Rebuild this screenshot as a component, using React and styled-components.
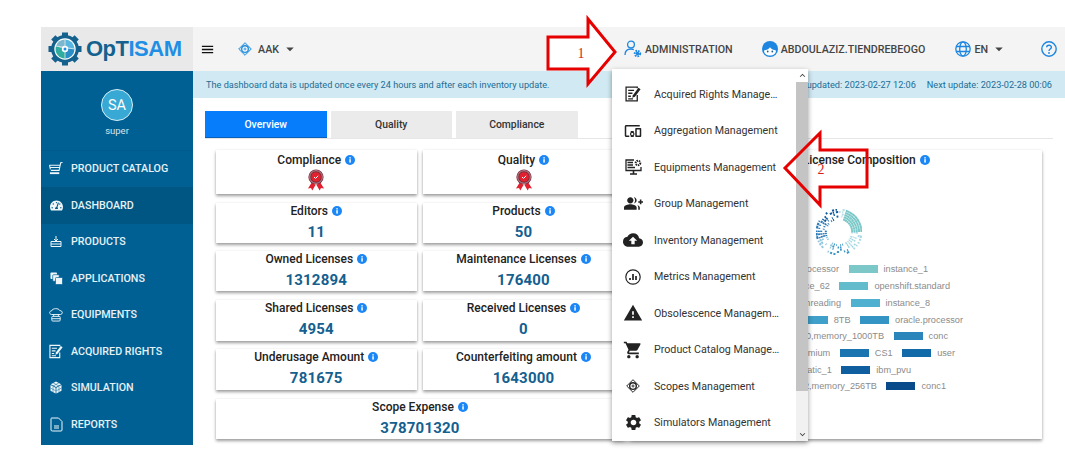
import React from 'react';
import styled, { createGlobalStyle } from 'styled-components';
import {
   MdMenu, MdDevicesOther, MdGroupAdd, MdCloudUpload, MdWarning, MdShoppingCart, MdSettings,
   MdArrowDropDown, MdKeyboardArrowUp, MdKeyboardArrowDown,
} from 'react-icons/md';
import { FaTachometerAlt } from 'react-icons/fa';

const GlobalStyle = createGlobalStyle`
   html, body { margin: 0; padding: 0; background: #fff; }
   body { font-family: Roboto, "Liberation Sans", sans-serif; }
   * { box-sizing: border-box; }
`

const Page = styled.div`
   position: relative;
   width: 1065px;
   height: 454px;
   padding: 27px 0 9px 41px;
   overflow: hidden;
`

const Shell = styled.div`
   position: relative;
   display: grid;
   grid-template-columns: 152px minmax(0, 1fr);
   grid-template-rows: 44px 1fr;
   height: 100%;
`

const Brand = styled.div`
   display: flex;
   align-items: center;
   gap: 4px;
   padding-left: 7px;
   background: #e9e9e9;
`

const BrandText = styled.span`
   font-family: "Liberation Sans", Arial, sans-serif;
   font-size: 22px;
   font-weight: 700;
   letter-spacing: -0.5px;
   color: #14618e;
   span { color: #1f8fe6; }
`

const TopBar = styled.header`
   display: flex;
   align-items: center;
   padding: 0 8px 0 7px;
   background: #f4f4f4;
   color: #444;
   font-size: 10.7px;
   font-weight: 500;
`

const TopItem = styled.div`
   display: flex;
   align-items: center;
   gap: ${p => p.$gap || 4}px;
   margin-left: ${p => p.$left || 0}px;
   white-space: nowrap;
`

const Caret = styled(MdArrowDropDown)`
   margin-left: ${p => p.$left}px;
`

const Sidebar = styled.nav`
   background: #006093;
   color: #e6f1f6;
`

const Profile = styled.div`
   display: flex;
   flex-direction: column;
   align-items: center;
   height: 79.5px;
   padding-top: 18px;
   border-bottom: 1px solid #005a8a;
`

const Avatar = styled.div`
   display: flex;
   align-items: center;
   justify-content: center;
   width: 32px;
   height: 32px;
   border: 1px solid #d7eef6;
   border-radius: 50%;
   background: #38a9d4;
   color: #fff;
   font-size: 14.5px;
`

const UserName = styled.div`
   margin-top: 4px;
   font-size: 9.5px;
   color: #d5e6ee;
`

const NavItem = styled.div`
   display: flex;
   align-items: center;
   gap: 8px;
   height: 36.5px;
   padding-left: 8px;
   font-size: 10.7px;
   font-weight: 500;
   background: ${p => (p.$active ? '#005682' : 'transparent')};
`

const NavIcon = styled.span`
   display: flex;
   justify-content: center;
   width: 14px;
   color: #eef6fa;
`

const Main = styled.main`
   min-width: 0;
`

const Banner = styled.div`
   display: flex;
   align-items: center;
   justify-content: space-between;
   height: 27px;
   padding: 0 13px;
   background: #d0e9f3;
   color: #1d6c95;
   font-size: 9.17px;
   white-space: nowrap;
   div { display: flex; gap: 11px; }
`

const Tabs = styled.div`
   display: flex;
   gap: 4px;
   height: 28px;
   margin: 13px 12px 0 12px;
   border-bottom: 1px solid #e6e6e6;
`

const Tab = styled.div`
   display: flex;
   align-items: center;
   justify-content: center;
   width: 121.5px;
   height: 27px;
   font-size: 10.4px;
   font-weight: 500;
   color: ${p => (p.$active ? '#fff' : '#333')};
   background: ${p => (p.$active ? '#067dfb' : '#ebebeb')};
   border-bottom: 1px solid ${p => (p.$active ? '#0a5fb8' : '#ebebeb')};
`

const Board = styled.div`
   display: grid;
   grid-template-columns: 200.5px 201px 411.5px;
   grid-template-rows: 44px 40px 40px 41px 41px 40px;
   column-gap: 6.5px;
   row-gap: 8.5px;
   margin: 11px 0 0 23px;
`

const Card = styled.div`
   display: flex;
   flex-direction: column;
   align-items: center;
   grid-column: ${p => (p.$wide ? '1 / 3' : 'auto')};
   padding-top: ${p => (p.$badge ? 2 : 0.5)}px;
   background: #fff;
   box-shadow: 0 2px 3px rgba(0, 0, 0, 0.38), 0 0 2px rgba(0, 0, 0, 0.06);
`

const CardTitle = styled.div`
   display: flex;
   align-items: center;
   gap: 4px;
   height: 15px;
   font-size: 12px;
   font-weight: 500;
   color: #222;
   white-space: nowrap;
`

const CardValue = styled.div`
   margin-top: 3.5px;
   font-size: 15px;
   line-height: 20px;
   font-weight: 700;
   letter-spacing: 0.2px;
   color: #14608f;
`

const Badge = styled.svg`
   margin-top: 2px;
`

const Panel = styled.section`
   grid-column: 3;
   grid-row: 1 / -1;
   display: flex;
   flex-direction: column;
   padding: 2px 0 0 0;
   background: #fff;
   box-shadow: 0 2px 3px rgba(0, 0, 0, 0.38), 0 0 2px rgba(0, 0, 0, 0.06);
`

const PanelTitle = styled(CardTitle)`
   align-self: center;
   margin-left: 60px;
`

const Donut = styled.svg`
   flex: none;
   margin: 42px 0 0 185.5px;
`

const Legend = styled.div`
   margin-top: 6px;
`

const LegendRow = styled.div`
   display: flex;
   justify-content: flex-end;
   align-items: center;
   gap: 6px;
   height: 16.72px;
   padding-right: ${p => p.$right}px;
   font-family: "Liberation Sans", Arial, sans-serif;
   font-size: 9.2px;
   color: #8b8b8b;
   white-space: nowrap;
`

const Swatch = styled.i`
   flex: none;
   width: 29px;
   height: 8px;
   margin-left: 3.5px;
   background: ${p => p.$color};
`

const Menu = styled.div`
   position: absolute;
   left: 571px;
   top: 42px;
   display: flex;
   width: 196px;
   height: 372px;
   background: #fff;
   box-shadow: 0 2px 5px rgba(0, 0, 0, 0.4);
`

const MenuList = styled.ul`
   flex: 1;
   min-width: 0;
   margin: 0;
   padding: 7px 0 0;
   list-style: none;
`

const MenuItem = styled.li`
   display: flex;
   align-items: center;
   height: 36.5px;
   font-size: 10.7px;
   color: #333;
`

const MenuIcon = styled.span`
   display: flex;
   justify-content: center;
   flex: none;
   width: 42px;
   color: #222;
`

const MenuLabel = styled.span`
   width: 126.5px;
   overflow: hidden;
   white-space: nowrap;
   text-overflow: ellipsis;
`

const Scrollbar = styled.div`
   display: flex;
   flex-direction: column;
   flex: none;
   width: 12px;
   background: #f1f1f1;
   color: #444;
`

const ScrollCap = styled.div`
   display: flex;
   justify-content: center;
   align-items: center;
   flex: none;
   height: 13px;
   background: ${p => (p.$plain ? '#fff' : '#f1f1f1')};
`

const ScrollThumb = styled.div`
   flex: none;
   height: 309px;
   background: #c4c4c4;
`

const ScrollTrack = styled.div`
   flex: 1;
`

const Callout = styled.svg`
   position: absolute;
   left: 0;
   top: 0;
   pointer-events: none;
`

const CalloutNumber = styled.text`
   font-family: "Liberation Serif", serif;
   font-size: 14px;
   fill: #d81b1b;
   text-anchor: middle;
`

function InfoDot() {
   return (
      <svg width="10" height="10" viewBox="0 0 10 10">
         <circle cx="5" cy="5" r="5" fill="#1b86f5" />
         <rect x="4.3" y="4.2" width="1.5" height="3.4" fill="#fff" />
         <rect x="4.3" y="2.2" width="1.5" height="1.3" fill="#fff" />
      </svg>
   )
}

function Rosette() {
   return (
      <Badge width="18" height="22" viewBox="0 0 18 22">
         <path d="M5 13 L1 19.5 L4 19 L5.3 21.5 L8.5 16z" fill="#e2202e" />
         <path d="M13 13 L17 19.5 L14 19 L12.7 21.5 L9.5 16z" fill="#e2202e" />
         <circle cx="9" cy="8" r="7.6" fill="#7d2a3a" />
         <circle cx="9" cy="8" r="6.3" fill="none" stroke="#c9a6ad" strokeWidth="0.8" />
         <circle cx="9" cy="8" r="4.8" fill="#e2202e" />
         <path d="M7 8 L8.5 9.4 L11.2 6.8" fill="none" stroke="#fff" strokeWidth="1" />
      </Badge>
   )
}

function Logo() {
   const teeth = [0, 45, 90, 135, 180, 225, 270, 315]
   return (
      <svg width="34" height="34" viewBox="0 0 34 34">
         {teeth.map(a => (
            <rect key={a} x="14" y="0.5" width="6" height="6" fill="#14618e" transform={`rotate(${a} 17 17)`} />
         ))}
         <circle cx="17" cy="17" r="12.3" fill="#fff" stroke="#14618e" strokeWidth="3.2" />
         <path d="M17 17 L17 7.5 A9.5 9.5 0 0 1 26.5 17z" fill="#58b7e0" />
         <path d="M17 17 L26.5 17 A9.5 9.5 0 0 1 17 26.5z" fill="#2a8fc7" />
         <path d="M17 17 L17 26.5 A9.5 9.5 0 0 1 8 14z" fill="#2fae9f" />
         <path d="M17 17 L8 14 A9.5 9.5 0 0 1 17 7.5z" fill="#7bb8cf" />
         <path d="M17 7.5 V26.5 M8 14 L26.5 17" stroke="#e9e9e9" strokeWidth="0.8" />
         <circle cx="17" cy="17" r="3.2" fill="#fff" />
         <circle cx="17" cy="17" r="1.5" fill="#1f8fe6" />
      </svg>
   )
}

function ScopeIcon({ size = 14, color = '#222', fill = 'none' }) {
   return (
      <svg width={size} height={size} viewBox="0 0 16 16" fill="none" stroke={color} strokeWidth="1.6">
         <path d="M8 0.8 L15.2 8 L8 15.2 L0.8 8z" fill={fill} strokeWidth="1.1" />
         <circle cx="8" cy="8" r="3.8" fill="#fff" />
         <path d="M8 6.2 V9.8 M6.2 8 H9.8" strokeWidth="1" />
      </svg>
   )
}

function AdminIcon() {
   return (
      <svg width="18" height="18" viewBox="0 0 18 18" fill="none" stroke="#1c86e0" strokeWidth="1.3">
         <circle cx="7" cy="4.5" r="3.4" />
         <path d="M1 15 C1 10.5 4 9 7 9 C8 9 9 9.2 9.8 9.6" />
         <circle cx="13.5" cy="13.5" r="2.7" strokeWidth="2" strokeDasharray="1.6 1" />
         <circle cx="13.5" cy="13.5" r="1.8" fill="#1c86e0" stroke="none" />
      </svg>
   )
}

function FaceIcon() {
   return (
      <svg width="16" height="16" viewBox="0 0 16 16">
         <circle cx="8" cy="8" r="8" fill="#1c86e0" />
         <path d="M2 9.5 C4 9 7 8 8 6.2 C9 8 12 9 14 9.5 C14 13 11 14.6 8 14.6 C5 14.6 2 13 2 9.5z" fill="#fff" />
         <circle cx="5.7" cy="10.5" r="0.9" fill="#1c5f8e" />
         <circle cx="10.3" cy="10.5" r="0.9" fill="#1c5f8e" />
      </svg>
   )
}

function GlobeIcon() {
   return (
      <svg width="16" height="16" viewBox="0 0 16 16" fill="none" stroke="#1c86e0" strokeWidth="1.3">
         <circle cx="8" cy="8" r="7.2" />
         <ellipse cx="8" cy="8" rx="3.3" ry="7.2" />
         <path d="M1 5.5 H15 M1 10.5 H15" />
      </svg>
   )
}

function HelpIcon() {
   return (
      <svg width="16" height="16" viewBox="0 0 16 16" fill="none" stroke="#1c86e0" strokeWidth="1.4">
         <circle cx="8" cy="8" r="7.2" />
         <path d="M5.7 6.3 C5.7 3.6 10.4 3.6 10.4 6.2 C10.4 8 8 8 8 10" />
         <circle cx="8" cy="12" r="0.9" fill="#1c86e0" stroke="none" />
      </svg>
   )
}

function CartLine() {
   return (
      <svg width="15" height="15" viewBox="0 0 15 15" fill="none" stroke="currentColor" strokeWidth="1.1">
         <path d="M14.5 1 L12.5 1.4 L10.8 9.5 H2" />
         <path d="M0.5 4 H12 M1 6.5 H11.5 M1.5 8.5 L0.5 4" />
         <path d="M1 12.5 H11" strokeWidth="2" />
      </svg>
   )
}

function BoxDown() {
   return (
      <svg width="12" height="13" viewBox="0 0 12 13" fill="none" stroke="currentColor" strokeWidth="1">
         <path d="M1 6.5 H11 V11.5 H1z M1 9 H11" />
         <path d="M6 1 V6 M4 4 L6 6 L8 4" />
      </svg>
   )
}

function StackedPages() {
   return (
      <svg width="13" height="13" viewBox="0 0 13 13" fill="currentColor">
         <rect x="0.5" y="0.5" width="6.5" height="6.5" rx="0.8" />
         <rect x="2.7" y="2.7" width="6.5" height="6.5" rx="0.8" stroke="#006093" strokeWidth="0.7" />
         <rect x="5.5" y="5.5" width="7" height="7" rx="0.8" stroke="#006093" strokeWidth="0.7" />
      </svg>
   )
}

function CloudServer() {
   return (
      <svg width="15" height="15" viewBox="0 0 15 15" fill="none" stroke="currentColor" strokeWidth="1">
         <path d="M2.5 7.5 C0 7 0 3.8 2.8 3.6 C3.6 0.6 10.5 0.4 11.5 3.3 C15 3.4 15 7 12.5 7.5 H2.5z" />
         <rect x="3" y="9.5" width="9" height="5" rx="1" />
         <path d="M3 12 H12 M5 7.5 V9.5 M10 7.5 V9.5" />
      </svg>
   )
}

function RightsNote({ size = 15 }) {
   return (
      <svg width={size} height={size} viewBox="0 0 15 15" fill="none" stroke="currentColor" strokeWidth="1.2">
         <path d="M11.5 8.5 V14 H1 V1 H11.5 V2" />
         <path d="M3 4 H8.5 M3 6.8 H7 M3 9.6 H5.5 M3 12 H7.5" />
         <path d="M6.8 11 L7.4 8.6 L12.6 1.6 L14.6 3 L9.3 10 z" fill="currentColor" stroke="none" />
      </svg>
   )
}

function Cube() {
   return (
      <svg width="12" height="13" viewBox="0 0 12 13" fill="currentColor">
         <path d="M6 0.5 L11.2 3.3 L6 6 L0.8 3.3z" />
         <path d="M0.5 4 L5.6 6.7 V12.6 L0.5 9.7z" />
         <path d="M11.5 4 L6.4 6.7 V12.6 L11.5 9.7z" />
         <path d="M3 1.8 L9 5 M9 1.8 L3 5 M3 5.5 V11 M9 5.5 V11 M0.5 7 L5.6 9.7 M6.4 9.7 L11.5 7" stroke="#006093" strokeWidth="0.5" fill="none" />
      </svg>
   )
}

function ReportFile() {
   return (
      <svg width="13" height="15" viewBox="0 0 13 15" fill="none" stroke="currentColor" strokeWidth="1">
         <path d="M1.5 1 H8.5 L12 4.5 V13 Q12 14 11 14 H2.5 Q1 14 1 13 V2 Q1 1 1.5 1z" />
         <path d="M4 9 H9 M4 11 H9" strokeWidth="1.1" />
      </svg>
   )
}

function MonitorGear() {
   return (
      <svg width="17" height="17" viewBox="0 0 17 17" fill="none" stroke="currentColor" strokeWidth="1.3">
         <path d="M9 1 H1 V11.5 H16 V8" />
         <path d="M2.5 3.5 H8 M2.5 6 H8 M2.5 8.5 H10" />
         <path d="M8.5 11.5 V14.5 M5 15 H12" strokeWidth="1.6" />
         <circle cx="13" cy="4" r="2.3" strokeWidth="2" strokeDasharray="1.3 0.8" />
      </svg>
   )
}

function MetricsDial() {
   return (
      <svg width="16" height="16" viewBox="0 0 16 16" fill="none" stroke="currentColor" strokeWidth="1.2">
         <circle cx="8" cy="8" r="7.2" />
         <path d="M5 11 V9 M8 11 V5 M11 11 V7" strokeWidth="1.7" />
      </svg>
   )
}

const donutPalette = angle => {
   if (angle < 12) return '#b9dfe6'
   if (angle < 88) return '#7cc8c8'
   if (angle < 150) return '#a6d8e4'
   if (angle < 205) return '#3d97c7'
   if (angle < 250) return '#92c6df'
   if (angle < 300) return '#2a7ab7'
   return '#0e5a9d'
}

// scattered tiles of the ring, seeded so the picture stays the same
const donutTiles = () => {
   const tiles = []
   let seed = 17
   const next = () => {
      seed = (seed * 16807) % 2147483647
      return seed / 2147483647
   }
   for (let r = 13.2; r < 22.5; r += 2.3) {
      for (let a = 0; a < 360; a += 9) {
         const solid = a >= 12 && a < 88
         if (!solid && next() < 0.34) continue
         const span = solid ? 9 : 3 + next() * 4
         const rad = d => ((d - 90) * Math.PI) / 180
         const x = (d, q) => (23 + q * Math.cos(rad(d))).toFixed(2)
         const y = (d, q) => (23 + q * Math.sin(rad(d))).toFixed(2)
         tiles.push({
            d: `M${x(a, r)} ${y(a, r)} A${r} ${r} 0 0 1 ${x(a + span, r)} ${y(a + span, r)}`,
            color: donutPalette(a),
            key: `${r}-${a}`,
         })
      }
   }
   return tiles
}

const navItems = [
   { text: 'PRODUCT CATALOG', icon: <CartLine /> },
   { text: 'DASHBOARD', icon: <FaTachometerAlt size={13} />, active: true },
   { text: 'PRODUCTS', icon: <BoxDown /> },
   { text: 'APPLICATIONS', icon: <StackedPages /> },
   { text: 'EQUIPMENTS', icon: <CloudServer /> },
   { text: 'ACQUIRED RIGHTS', icon: <RightsNote /> },
   { text: 'SIMULATION', icon: <Cube /> },
   { text: 'REPORTS', icon: <ReportFile /> },
]

const cards = [
   { title: 'Compliance', badge: true },
   { title: 'Quality', badge: true },
   { title: 'Editors', value: '11' },
   { title: 'Products', value: '50' },
   { title: 'Owned Licenses', value: '1312894' },
   { title: 'Maintenance Licenses', value: '176400' },
   { title: 'Shared Licenses', value: '4954' },
   { title: 'Received Licenses', value: '0' },
   { title: 'Underusage Amount', value: '781675' },
   { title: 'Counterfeiting amount', value: '1643000' },
   { title: 'Scope Expense', value: '378701320', wide: true },
]

const legend = [
   { right: 114, parts: [['sag.processor', '#7cc8c8'], ['instance_1']] },
   { right: 92, parts: [['instance_62', '#63bccb'], ['openshift.standard']] },
   { right: 112, parts: [['hyperthreading', '#4fb0d0'], ['instance_8']] },
   { right: 79, parts: [['ibm.memory', '#3fa0ca'], ['8TB', '#3494c3'], ['oracle.processor']] },
   { right: 94, parts: [['cpu_10,memory_1000TB', '#2a85bb'], ['conc']] },
   { right: 87, parts: [['premium', '#1a74b0'], ['CS1', '#136aa8'], ['user']] },
   { right: 131, parts: [['static_1', '#0e5ea0'], ['ibm_pvu']] },
   { right: 96, parts: [['cpu_2,memory_256TB', '#084a8a'], ['conc1']] },
]

const menuItems = [
   { text: 'Acquired Rights Management', icon: <RightsNote size={16} /> },
   { text: 'Aggregation Management', icon: <MdDevicesOther size={18} /> },
   { text: 'Equipments Management', icon: <MonitorGear /> },
   { text: 'Group Management', icon: <MdGroupAdd size={19} /> },
   { text: 'Inventory Management', icon: <MdCloudUpload size={20} /> },
   { text: 'Metrics Management', icon: <MetricsDial /> },
   { text: 'Obsolescence Management', icon: <MdWarning size={20} /> },
   { text: 'Product Catalog Management', icon: <MdShoppingCart size={20} /> },
   { text: 'Scopes Management', icon: <ScopeIcon size={14} /> },
   { text: 'Simulators Management', icon: <MdSettings size={19} /> },
]

function App() {
   return (
      <Page>
         <GlobalStyle />
         <Shell>
            <Brand>
               <Logo />
               <BrandText>OpT<span>ISAM</span></BrandText>
            </Brand>
            <TopBar>
               <MdMenu size={19} color="#111" />
               <TopItem $left={23} $gap={6}>
                  <ScopeIcon size={14} color="#2a8fd8" fill="#bfe0f5" />
                  <span>AAK</span>
                  <Caret size={18} $left={-4} />
               </TopItem>
               <TopItem $left={325} $gap={3}>
                  <AdminIcon />
                  <span>ADMINISTRATION</span>
               </TopItem>
               <TopItem $left={29} $gap={3}>
                  <FaceIcon />
                  <span>ABDOULAZIZ.TIENDREBEOGO</span>
               </TopItem>
               <TopItem $left={30} $gap={3}>
                  <GlobeIcon />
                  <span>EN</span>
                  <Caret size={18} $left={-1} />
               </TopItem>
               <TopItem $left={33}>
                  <HelpIcon />
               </TopItem>
            </TopBar>
            <Sidebar>
               <Profile>
                  <Avatar>SA</Avatar>
                  <UserName>super</UserName>
               </Profile>
               {navItems.map(item => (
                  <NavItem key={item.text} $active={item.active}>
                     <NavIcon>{item.icon}</NavIcon>
                     {item.text}
                  </NavItem>
               ))}
            </Sidebar>
            <Main>
               <Banner>
                  <span>The dashboard data is updated once every 24 hours and after each inventory update.</span>
                  <div>
                     <span>Last updated: 2023-02-27 12:06</span>
                     <span>Next update: 2023-02-28 00:06</span>
                  </div>
               </Banner>
               <Tabs>
                  <Tab $active>Overview</Tab>
                  <Tab>Quality</Tab>
                  <Tab>Compliance</Tab>
               </Tabs>
               <Board>
                  {cards.map(card => (
                     <Card key={card.title} $wide={card.wide} $badge={card.badge}>
                        <CardTitle>{card.title} <InfoDot /></CardTitle>
                        {card.badge ? <Rosette /> : <CardValue>{card.value}</CardValue>}
                     </Card>
                  ))}
                  <Panel>
                     <PanelTitle>License Composition <InfoDot /></PanelTitle>
                     <Donut width="46" height="46" viewBox="0 0 46 46" fill="none" strokeWidth="2">
                        {donutTiles().map(t => (
                           <path key={t.key} d={t.d} stroke={t.color} />
                        ))}
                     </Donut>
                     <Legend>
                        {legend.map(row => (
                           <LegendRow key={row.parts[0][0]} $right={row.right}>
                              {row.parts.map(([label, color]) => (
                                 <React.Fragment key={label}>
                                    <span>{label}</span>
                                    {color && <Swatch $color={color} />}
                                 </React.Fragment>
                              ))}
                           </LegendRow>
                        ))}
                     </Legend>
                  </Panel>
               </Board>
            </Main>
            <Menu>
               <MenuList>
                  {menuItems.map(item => (
                     <MenuItem key={item.text}>
                        <MenuIcon>{item.icon}</MenuIcon>
                        <MenuLabel>{item.text}</MenuLabel>
                     </MenuItem>
                  ))}
               </MenuList>
               <Scrollbar>
                  <ScrollCap $plain><MdKeyboardArrowUp size={11} /></ScrollCap>
                  <ScrollThumb />
                  <ScrollTrack />
                  <ScrollCap><MdKeyboardArrowDown size={11} /></ScrollCap>
               </Scrollbar>
            </Menu>
         </Shell>
         <Callout width="1065" height="454" viewBox="0 0 1065 454" fill="none" stroke="#e60000" strokeWidth="3">
            <path d="M588 19 L615 52 L588 84 V69 H548 V37 H588z" fill="#fff" />
            <CalloutNumber x="581" y="58" stroke="none">1</CalloutNumber>
            <path d="M820 133 L785 168 L820 205 V187 H867 V150 H820z" />
            <CalloutNumber x="821" y="174" stroke="none">2</CalloutNumber>
         </Callout>
      </Page>
   )
}

export default App
